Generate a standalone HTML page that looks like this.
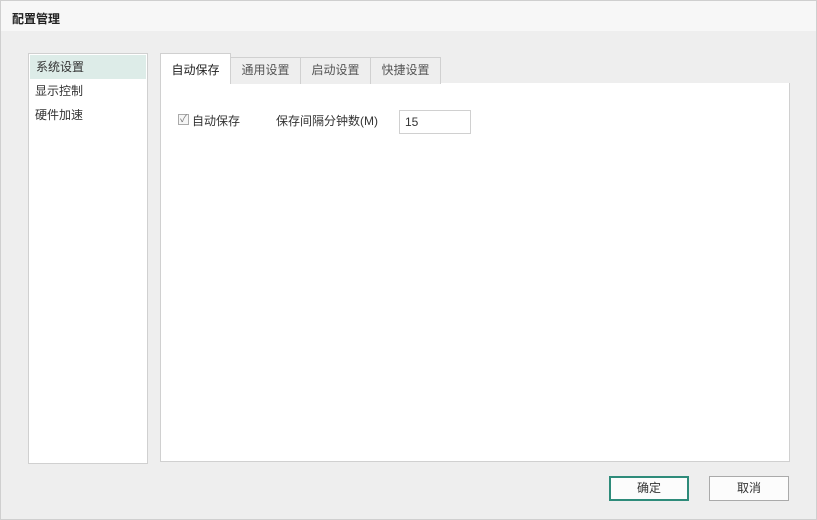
<!DOCTYPE html><html><head><meta charset="utf-8"><style>
*{box-sizing:border-box;margin:0;padding:0}
body{width:817px;height:520px;font-family:"Liberation Sans","Noto Sans CJK SC",sans-serif;font-size:12px;color:#333;background:#fff;position:relative;overflow:hidden}
.win{position:absolute;left:0;top:0;width:817px;height:520px;background:#eeeeee}
.frame{position:absolute;left:0;top:0;width:817px;height:520px;border:1px solid #cfcfcf;z-index:5}
.title{position:absolute;left:0;top:0;width:817px;height:31px;background:#f7f7f7;font-weight:bold;font-size:12px;padding:10px 0 0 12px;color:#222}
.abs{position:absolute}
.list{left:28px;top:53px;width:120px;height:411px;background:#fff;border:1px solid #d0d0d0}
.item{height:24px;line-height:24px;padding-left:6px}
.tab{top:57px;height:27px;border:1px solid #d0d0d0;border-bottom:none;background:#eeeeee;text-align:center;line-height:25px;color:#555}
.panel{left:160px;top:83px;width:630px;height:379px;background:#fff;border:1px solid #d0d0d0;border-top:none}
.btn{top:476px;width:80px;height:25px;background:#fcfcfc;text-align:center;line-height:21px}
</style></head><body><div class="win">
<div class="title">配置管理</div>
<div class="abs list">
<div class="item" style="background:#ddece8;margin:1px 1px 0">系统设置</div>
<div class="item">显示控制</div>
<div class="item">硬件加速</div>
</div>
<div class="abs panel"></div>
<div class="abs tab" style="left:160px;top:53px;height:31px;width:71px;background:#fff;color:#222;line-height:33px;z-index:2">自动保存</div>
<div class="abs tab" style="left:230px;width:71px">通用设置</div>
<div class="abs tab" style="left:300px;width:71px">启动设置</div>
<div class="abs tab" style="left:370px;width:71px">快捷设置</div>
<div class="abs" style="left:178px;top:114px;width:11px;height:11px;border:1px solid #aaa;background:#f6f6f6;font-size:10px;line-height:9px;text-align:center;color:#777">✓</div>
<div class="abs" style="left:192px;top:112px">自动保存</div>
<div class="abs" style="left:276px;top:112px">保存间隔分钟数(M)</div>
<div class="abs" style="left:399px;top:110px;width:72px;height:24px;border:1px solid #d0d0d0;background:#fff;font-size:12px;padding:4px 0 0 5px">15</div>
<div class="abs btn" style="left:609px;border:2px solid #2e8b7a">确定</div>
<div class="abs btn" style="left:709px;border:1px solid #aaa;line-height:23px">取消</div>
</div><div class="frame"></div></body></html>
